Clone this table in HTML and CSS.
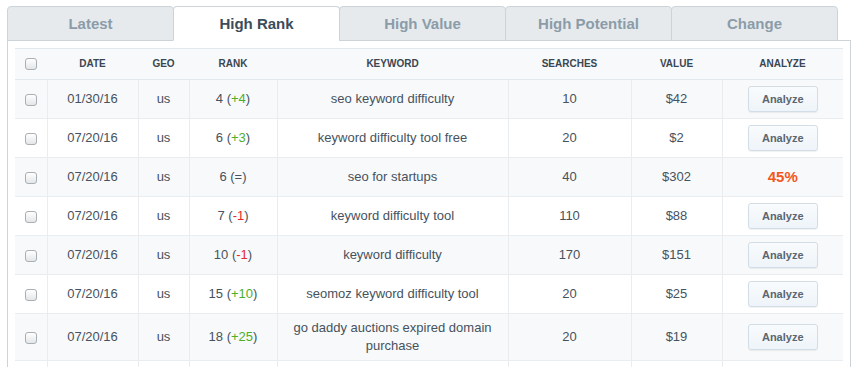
FILE: index.html
```html
<!DOCTYPE html>
<html>
<head>
<meta charset="utf-8">
<link rel="stylesheet" href="styles.css">
</head>
<body>
<div class="wrap">
  <div class="tabs">
    <div class="tab">Latest</div>
    <div class="tab active">High Rank</div>
    <div class="tab">High Value</div>
    <div class="tab">High Potential</div>
    <div class="tab">Change</div>
  </div>
  <div class="panel">
    <table class="grid">
      <colgroup>
        <col class="c-chk"><col class="c-date"><col class="c-geo"><col class="c-rank"><col class="c-kw"><col class="c-srch"><col class="c-val"><col class="c-an">
      </colgroup>
      <thead>
        <tr>
          <th><input type="checkbox" class="chk"></th>
          <th>Date</th><th>Geo</th><th>Rank</th><th>Keyword</th><th>Searches</th><th>Value</th><th>Analyze</th>
        </tr>
      </thead>
      <tbody>
        <tr>
          <td><input type="checkbox" class="chk"></td>
          <td>01/30/16</td><td>us</td><td>4 (<span class="up">+4</span>)</td><td>seo keyword difficulty</td><td>10</td><td>$42</td>
          <td><button class="btn">Analyze</button></td>
        </tr>
        <tr>
          <td><input type="checkbox" class="chk"></td>
          <td>07/20/16</td><td>us</td><td>6 (<span class="up">+3</span>)</td><td>keyword difficulty tool free</td><td>20</td><td>$2</td>
          <td><button class="btn">Analyze</button></td>
        </tr>
        <tr>
          <td><input type="checkbox" class="chk"></td>
          <td>07/20/16</td><td>us</td><td>6 (=)</td><td>seo for startups</td><td>40</td><td>$302</td>
          <td><span class="pct">45%</span></td>
        </tr>
        <tr>
          <td><input type="checkbox" class="chk"></td>
          <td>07/20/16</td><td>us</td><td>7 (<span class="down">-1</span>)</td><td>keyword difficulty tool</td><td>110</td><td>$88</td>
          <td><button class="btn">Analyze</button></td>
        </tr>
        <tr>
          <td><input type="checkbox" class="chk"></td>
          <td>07/20/16</td><td>us</td><td>10 (<span class="down">-1</span>)</td><td>keyword difficulty</td><td>170</td><td>$151</td>
          <td><button class="btn">Analyze</button></td>
        </tr>
        <tr>
          <td><input type="checkbox" class="chk"></td>
          <td>07/20/16</td><td>us</td><td>15 (<span class="up">+10</span>)</td><td>seomoz keyword difficulty tool</td><td>20</td><td>$25</td>
          <td><button class="btn">Analyze</button></td>
        </tr>
        <tr>
          <td><input type="checkbox" class="chk"></td>
          <td>07/20/16</td><td>us</td><td>18 (<span class="up">+25</span>)</td><td>go daddy auctions expired domain purchase</td><td>20</td><td>$19</td>
          <td><button class="btn">Analyze</button></td>
        </tr>
        <tr class="next">
          <td></td><td></td><td></td><td></td><td></td><td></td><td></td>
          <td><button class="btn" aria-label="Analyze"></button></td>
        </tr>
      </tbody>
    </table>
  </div>
</div>
</body>
</html>
```
FILE: styles.css
```css
html, body {
  margin: 0;
  padding: 0;
  background: #ffffff;
  font-family: "Liberation Sans", Arial, sans-serif;
  color: #46525d;
}

.wrap {
  padding: 6px 0 0 7px;
  width: 844px;
}

.tabs {
  display: flex;
  margin-bottom: -1px;
}

.tab {
  position: relative;
  z-index: 1;
  box-sizing: border-box;
  width: 167px;
  height: 35px;
  margin-right: -1px;
  border: 1px solid #cdd4d9;
  border-radius: 4px 4px 0 0;
  background: #e6eaed;
  color: #8b9ca8;
  font-size: 15px;
  font-weight: bold;
  text-align: center;
  line-height: 33px;
}

.tab.active {
  background: #ffffff;
  color: #3b4c5b;
  border-bottom-color: #ffffff;
}

.panel {
  box-sizing: border-box;
  width: 844px;
  height: 340px;
  border: 1px solid #cdd4d9;
  padding: 7px 0 0 7px;
  overflow: hidden;
}

.grid {
  width: 828px;
  border-collapse: collapse;
  table-layout: fixed;
  font-size: 13px;
  line-height: 18px;
}

.c-chk { width: 32px; }
.c-date { width: 91px; }
.c-geo { width: 51px; }
.c-rank { width: 88px; }
.c-kw { width: 231px; }
.c-srch { width: 123px; }
.c-val { width: 91px; }
.c-an { width: 121px; }

.grid th {
  background: #f7f9fa;
  border-top: 1px solid #e3e8ec;
  border-bottom: 1px solid #e3e8ec;
  height: 30px;
  padding: 0 4px;
  font-size: 10px;
  font-weight: bold;
  text-transform: uppercase;
  color: #3a4652;
  text-align: center;
  vertical-align: middle;
}

.grid td {
  height: 28px;
  padding: 5px 8px;
  border: 1px solid #e9edf0;
  border-top: none;
  text-align: center;
  vertical-align: middle;
  color: #46525d;
}

.grid td:first-child { border-left: none; padding: 5px 0; }
.grid td:last-child { border-right: none; }
.grid th:first-child { padding: 0; }

.grid tbody tr:nth-child(odd) td { background: #f8f9fb; }

.up { color: #4caf27; }
.down { color: #e8272b; }

.pct {
  color: #f4571c;
  font-size: 15px;
  font-weight: bold;
}

.chk {
  -webkit-appearance: none;
  appearance: none;
  box-sizing: border-box;
  width: 12px;
  height: 12px;
  margin: 0;
  display: inline-block;
  vertical-align: middle;
  border: 1px solid #a8afb5;
  border-radius: 3px;
  background: linear-gradient(#ffffff, #e4e6e8);
}

.btn {
  box-sizing: border-box;
  width: 70px;
  height: 26px;
  margin: 0;
  padding: 0;
  border: 1px solid #d3dde5;
  border-radius: 3px;
  background: linear-gradient(#f9fbfd, #eef4f9);
  box-shadow: 0 1px 1px rgba(0, 0, 0, 0.06);
  font-family: "Liberation Sans", Arial, sans-serif;
  font-size: 11px;
  font-weight: bold;
  color: #5b6670;
  vertical-align: middle;
}
```
